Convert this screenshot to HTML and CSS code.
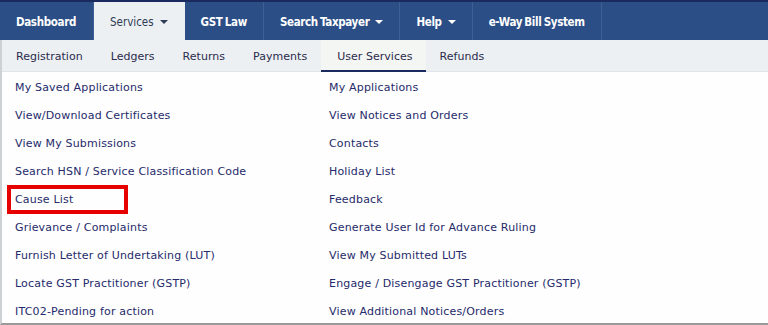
FILE: index.html
```html
<!DOCTYPE html>
<html>

<head>
    <link rel="stylesheet" href="styles.css">
</head>

<body>
    <nav class="topnav">
        <a class="nav-item">Dashboard</a>
        <a class="nav-item active">Services <span class="caret"></span></a>
        <a class="nav-item">GST Law</a>
        <a class="nav-item">Search Taxpayer <span class="caret"></span></a>
        <a class="nav-item">Help <span class="caret"></span></a>
        <a class="nav-item">e-Way Bill System</a>
    </nav>

    <div class="dropdown">
        <ul class="subnav">
            <li>Registration</li>
            <li>Ledgers</li>
            <li>Returns</li>
            <li>Payments</li>
            <li class="current">User Services</li>
            <li>Refunds</li>
        </ul>

        <ul class="links">
            <li>My Saved Applications</li>
            <li>My Applications</li>
            <li>View/Download Certificates</li>
            <li>View Notices and Orders</li>
            <li>View My Submissions</li>
            <li>Contacts</li>
            <li>Search HSN / Service Classification Code</li>
            <li>Holiday List</li>
            <li class="marked">Cause List</li>
            <li>Feedback</li>
            <li>Grievance / Complaints</li>
            <li>Generate User Id for Advance Ruling</li>
            <li>Furnish Letter of Undertaking (LUT)</li>
            <li>View My Submitted LUTs</li>
            <li>Locate GST Practitioner (GSTP)</li>
            <li>Engage / Disengage GST Practitioner (GSTP)</li>
            <li>ITC02-Pending for action</li>
            <li>View Additional Notices/Orders</li>
        </ul>
    </div>
</body>

</html>
```

FILE: styles.css
```css
* {
    margin: 0;
    padding: 0;
    box-sizing: border-box;
}

body {
    font-family: 'DejaVu Sans', Verdana, sans-serif;
    background-color: #fdfefd;
    color: #262a6b;
    width: 768px;
    height: 325px;
    overflow: hidden;
}

/* top menu bar */
.topnav {
    display: flex;
    height: 40px;
    background-color: #2c4e86;
    border-top: 2px solid #1b2a5e;
}

.nav-item {
    display: flex;
    align-items: center;
    padding: 1px 16px 0 16px;
    color: #ffffff;
    font-family: 'DejaVu Sans Condensed', 'DejaVu Sans', sans-serif;
    font-stretch: condensed;
    font-size: 11.5px;
    font-weight: bold;
    letter-spacing: -0.35px;
    word-spacing: -1px;
    border-right: 1px solid #3f5f94;
}

.nav-item:first-child {
    padding-right: 17px;
}

.nav-item.active {
    background-color: #ecf0f3;
    color: #2f3b55;
    font-weight: normal;
    letter-spacing: 0;
    word-spacing: 0;
    border-right-color: #ecf0f3;
}

.caret {
    display: inline-block;
    margin-left: 6px;
    border-left: 4px solid transparent;
    border-right: 4px solid transparent;
    border-top: 4px solid currentColor;
}

/* dropdown panel */
.dropdown {
    border-left: 2px solid #cdd1d4;
    border-bottom: 2px solid #999999;
    height: 285px;
}

.subnav {
    display: flex;
    list-style: none;
    height: 32px;
    background-color: #ecf0f3;
    border-bottom: 1px solid #dfe4ea;
}

.subnav li {
    display: flex;
    align-items: center;
    padding: 1px 14px 0 14px;
    font-size: 11px;
    letter-spacing: 0.03px;
    color: #2b2b4b;
}

.subnav li.current {
    background-color: #f4f6f4;
    border-bottom: 2px solid #1b2a5e;
    margin-bottom: -1px;
    padding: 2px 13px 0 16px;
}

.links {
    list-style: none;
    display: grid;
    grid-template-columns: 314px 1fr;
    grid-auto-rows: 28px;
    padding-top: 1px;
}

.links li {
    display: flex;
    align-items: center;
    padding-left: 13px;
    font-size: 11px;
    letter-spacing: 0.18px;
}

.links li.marked {
    position: relative;
}

.links li.marked::after {
    content: "";
    position: absolute;
    left: 5px;
    top: 0;
    width: 121px;
    height: 29px;
    box-sizing: border-box;
    border: 4px solid #e60000;
}
```
